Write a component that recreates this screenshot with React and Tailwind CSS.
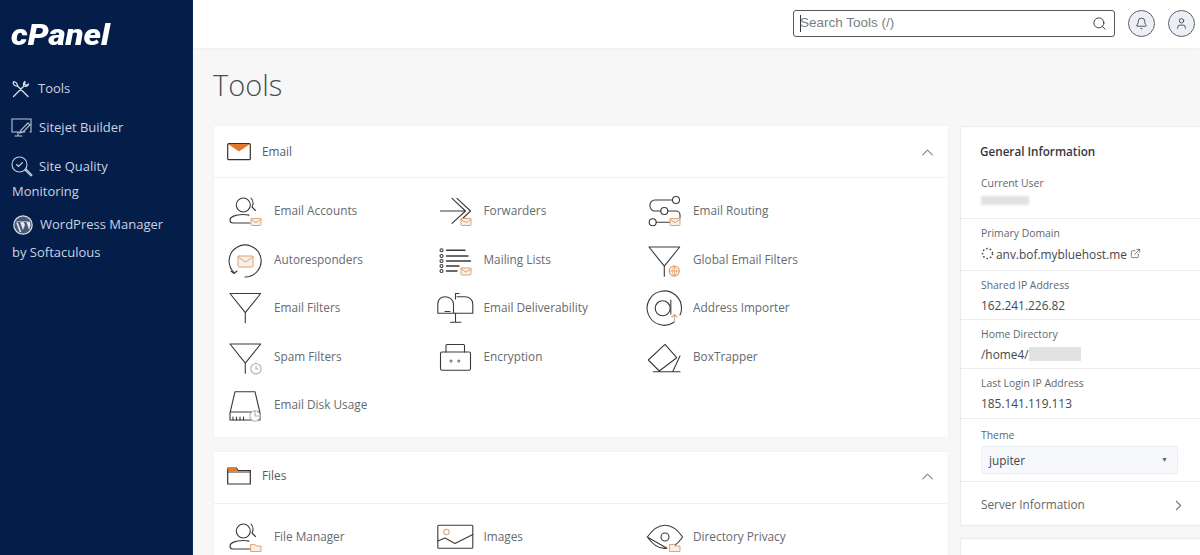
import React from "react";
import { ChevronUp, ChevronRight, Search, Bell, User, ExternalLink } from "lucide-react";

const D = "#3a3a3a";
const O = "#d9a67e";
const Env = ({ x = 25, y = 25.5, w = 10, h = 7 }) => (
  <g fill="#fbeee2" stroke={O} strokeWidth="1">
    <rect x={x} y={y} width={w} height={h} rx="1" />
    <path d={`M${x} ${y + 1}L${x + w / 2} ${y + h / 2 + 0.5}L${x + w} ${y + 1}`} fill="none" />
  </g>
);
const Fold = ({ x = 25, y = 25.5 }) => (
  <path d={`M${x} ${y}h4l1 1.5h5v5.5h-10z`} fill="#fbeee2" stroke={O} strokeWidth="1" />
);
const Ic = ({ children }) => (
  <svg width="40" height="36" viewBox="0 0 40 36" fill="none" stroke={D} strokeWidth="1.1" strokeLinecap="round" strokeLinejoin="round" className="shrink-0">
    {children}
  </svg>
);
const Person = ({ children }) => (
  <Ic>
    <circle cx="17.3" cy="12" r="7" />
    <path d="M25 5a8 8 0 0 1 1 9l3.5 3.5M24 30H7a3 3 0 0 1-3-3c0-3 5-5.5 13-5.5 2 0 4 .2 6 .6" />
    {children}
  </Ic>
);
const Funnel = ({ dy = 0, children }) => (
  <Ic>
    <path d={`M4 ${3.5 + dy}H34.7L19.3 ${22.7 + dy}ZM19.3 ${22.7 + dy}V${32.7 + dy}`} />
    {children}
  </Ic>
);

const icons = {
  accounts: <Person><Env /></Person>,
  auto: (
    <Ic>
      <path d="M8 30.5A16 16 0 1 1 19 35" />
      <path d="M5 29l3 2.5 3-2.5" />
      <Env x={12} y={14} w={15} h={11} />
    </Ic>
  ),
  filters: <Funnel />,
  spam: (
    <Funnel dy={1.5}>
      <circle cx="30" cy="29.7" r="5.2" stroke="#b9ad96" fill="#fff" />
      <path d="M30 27v3h2" stroke="#b9ad96" />
    </Funnel>
  ),
  disk: (
    <Ic>
      <path d="M9 4.7H29L34 26V33H4V26ZM4 25H34" />
      <path d="M7 30v3M10.5 30v3M14 30v3M17.5 30v3" />
      <circle cx="29" cy="29" r="5.2" stroke="#b9ad96" fill="#fff" />
      <path d="M29 29v-5M29 29h5" stroke="#b9ad96" />
    </Ic>
  ),
  forward: (
    <Ic>
      <path d="M4.5 18H29M16 5.3 29.5 18 16 30.3M21 5.3 34.5 18 25 27" />
      <Env />
    </Ic>
  ),
  lists: (
    <Ic>
      <circle cx="5.5" cy="8.3" r="1.5" /><circle cx="5.5" cy="14" r="1.5" /><circle cx="5.5" cy="19" r="1.5" /><circle cx="5.5" cy="24" r="1.5" /><circle cx="5.5" cy="29" r="1.5" />
      <path d="M10.5 8.3H29M10.5 14H32M10.5 19H34.5M10.5 24H23M10.5 29H21" strokeWidth="1.4" />
      <Env y={26} />
    </Ic>
  ),
  deliver: (
    <Ic>
      <path d="M1.8 23.3V14C1.8 9.5 5 6.7 9 6.7S17.5 9.5 17.5 14V23.3ZM9 21.5H14M17.5 23.3H36.8V14C36.8 9.5 33 6.7 29 6.7H21" />
      <path d="M19.5 23.3V32.3M14.5 32.3H25M19.5 9V3.5H23" />
    </Ic>
  ),
  encrypt: (
    <Ic>
      <rect x="4.5" y="13" width="30" height="18.3" rx="1.5" />
      <path d="M10 13V6.5a1 1 0 0 1 1-1H27.5a1 1 0 0 1 1 1V13" />
      <circle cx="15" cy="22" r="1" stroke="#777" /><circle cx="22.8" cy="22" r="1" stroke="#777" />
    </Ic>
  ),
  routing: (
    <Ic>
      <circle cx="31" cy="7" r="3.5" /><circle cx="19.3" cy="18" r="3.5" /><circle cx="7.7" cy="29.3" r="3.5" />
      <path d="M27.5 7H10a5 5 0 0 0-5 5v1a5 5 0 0 0 5 5h5.8M22.8 18H31a4 4 0 0 1 4 4v3M11.2 29.3H25" />
      <Env />
    </Ic>
  ),
  global: (
    <Funnel dy={1.5}>
      <circle cx="29.3" cy="29" r="5" stroke="#e0995f" fill="#fff" />
      <path d="M24.3 29h10M29.3 24v10M29.3 24c-3 3-3 7 0 10M29.3 24c3 3 3 7 0 10" stroke="#e0995f" strokeWidth="0.8" />
    </Funnel>
  ),
  importer: (
    <Ic>
      <path d="M29 32.3A17.2 17.2 0 1 1 36.5 18.5C36.5 21 36 23 35 25" />
      <circle cx="17.7" cy="18.3" r="7.5" />
      <path d="M25.8 10V24" />
      <path d="M29.5 32V24.5M27 27l2.5-2.5 2.5 2.5" stroke={O} />
    </Ic>
  ),
  trapper: (
    <Ic>
      <path d="M3.3 21 20 5.3 31.7 18.7 14.3 32ZM8.3 32.7H35M35 17 27.7 32.7" />
    </Ic>
  ),
  manager: <Person><Fold /></Person>,
  images: (
    <Ic>
      <rect x="1.8" y="6.3" width="35" height="23" rx="1" />
      <path d="M1.8 22 9 19l10 5.5 17.8-9" />
      <circle cx="10.5" cy="13" r="2.7" stroke={O} />
    </Ic>
  ),
  privacy: (
    <Ic>
      <path d="M2.3 18C8 10 14 6.3 20 6.3S32 10 37.7 18C35 22 32 25 29 27M22 29.2C14 30.5 8 26 2.3 18Z" />
      <circle cx="20" cy="18" r="4" />
      <Fold />
    </Ic>
  ),
};

const Row = ({ icon, label }) => (
  <div className="flex items-center h-[48.5px] gap-[8px]">
    {icons[icon]}
    <span className="text-[11.8px] text-[#666b70]">{label}</span>
  </div>
);

const Card = ({ header, title, items, headClass }) => (
  <section className="bg-white shadow-[0_0_2px_rgba(0,0,0,0.05)]">
    <div className={"h-[52px] flex items-center pl-[13px] pr-[11px] border-b border-[#f1f1f1] " + headClass}>
      <svg width="24" height="18" viewBox="0 0 24 18" fill="none" className="mr-[11px]">{header}</svg>
      <span className="text-[11.8px] text-[#555a5f]">{title}</span>
      <ChevronUp size={19} strokeWidth={1.6} className="ml-auto text-[#8a8f94]" />
    </div>
    <div className="grid grid-cols-[209.5px_209.5px_209.5px] pl-[12px] pt-[9px] pb-[7px]">
      {items.map((r) => <Row key={r[1]} icon={r[0]} label={r[1]} />)}
    </div>
  </section>
);

const Info = ({ label, children, className = "" }) => (
  <div className={"pl-[20px] border-b border-[#ececec] " + className}>
    <div className="text-[10.4px] leading-[14px] font-medium text-[#62676c]">{label}</div>
    {children}
  </div>
);
const Val = ({ children }) => <div className="text-[11.9px] leading-[18px] mt-[4px] text-[#44494e] flex items-center">{children}</div>;

const NavLine = ({ children, className = "" }) => <div className={"text-[13px] text-[#c9d3e2] px-[12px] " + className}>{children}</div>;

export default function App() {
  return (
    <div className="w-[1200px] h-[555px] overflow-hidden flex bg-[#f7f7f7] font-['Open_Sans',sans-serif]">
      <aside className="w-[193px] shrink-0 bg-[#041e49] border-r border-[#0b2a57]">
        <div className="h-[73px] pl-[11px] pt-[16px] text-[29px] leading-[38px] font-black italic text-white font-['Roboto',sans-serif]">
          <span className="inline-block origin-left scale-x-[1.14]">cPanel</span>
        </div>
        <NavLine className="flex items-center h-[32px] gap-[8px] pl-[12px]">
          <svg width="18" height="18" viewBox="0 0 18 18" fill="none" stroke="#d8e0ea" strokeWidth="1.3" strokeLinecap="round" strokeLinejoin="round"><path d="M1.5 16.5 12 6M12 6a3.2 3.2 0 0 1 1-4.5l-.5 2.5 2 1.5 2-1.5A3.2 3.2 0 0 1 12 6M16 16.5 6 6.5M6 6.5 4.5 3 2 1.5 1 3l1.5 2.5Z" /></svg>
          <span>Tools</span>
        </NavLine>
        <NavLine className="flex items-center h-[32px] gap-[7px] mt-[7px] pl-[11px]">
          <svg width="21" height="20" viewBox="0 0 21 20" fill="none" stroke="#b9c5d6" strokeWidth="1.1" strokeLinecap="round"><path d="M14 14H1V1h19v13h-1M7 14v3M4 18h7M17 5l-7 7-1 3 3-1 7-7Z" /></svg>
          <span>Sitejet Builder</span>
        </NavLine>
        <NavLine className="flex items-center h-[32px] gap-[6px] mt-[7px] pl-[11px]">
          <svg width="22" height="22" viewBox="0 0 22 22" fill="none" stroke="#c5cfdd" strokeWidth="1.1" strokeLinecap="round"><circle cx="8.5" cy="8.5" r="7.5" /><path d="M5.5 8.5l2 2 4-4M14 14l6 6 1-1-6-6" /></svg>
          <span>Site Quality</span>
        </NavLine>
        <NavLine className="h-[22px] leading-[20px] mt-[-2px]">Monitoring</NavLine>
        <NavLine className="flex items-center h-[32px] gap-[7px] mt-[6px] pl-[13px]">
          <svg width="20" height="20" viewBox="0 0 20 20"><circle cx="10" cy="10" r="9.8" fill="#d5dce6" /><circle cx="10" cy="10" r="8.6" fill="#4a5a72" /><path d="M3.5 6.5h5v1H7.5L10 14.5l1.7-4.5-1-2.8h-1v-.7h5v.7h-1l2.4 7 1-3.5c.5-2-.5-3-.5-4" fill="#e9edf2" stroke="#e9edf2" strokeWidth=".4" /><path d="M4 7.5 7.5 17" stroke="#e9edf2" strokeWidth="1.6" /></svg>
          <span>WordPress Manager</span>
        </NavLine>
        <NavLine className="h-[25px] leading-[22px]">by Softaculous</NavLine>
      </aside>
      <div className="flex-1 min-w-0 flex flex-col">
        <header className="h-[48px] shrink-0 bg-white shadow-[0_1px_3px_rgba(0,0,0,0.04)] flex items-center pl-[600px] relative">
          <div className="w-[322px] h-[27px] mt-[-2px] border border-[#55595d] rounded-[3px] bg-white flex items-center pl-[6px] pr-[7px] font-['Liberation_Sans',sans-serif]">
            <span className="w-px h-[17px] bg-[#333]" />
            <span className="text-[13.5px] mt-[1px] ml-[-1px] text-[#7b7f83]">Search Tools (/)</span>
            <Search size={15} strokeWidth={1.5} className="ml-auto text-[#33373b]" />
          </div>
          <div className="ml-[13px] w-[27px] h-[27px] mt-[-2px] rounded-full border border-[#5d6166] bg-[#eceff6] flex items-center justify-center"><Bell size={13} strokeWidth={1.5} className="text-[#333]" /></div>
          <div className="ml-[13px] w-[27px] h-[27px] mt-[-2px] rounded-full border border-[#5d6166] bg-[#eceff6] flex items-center justify-center"><User size={13} strokeWidth={1.5} className="text-[#333]" /></div>
        </header>
        <h1 className="text-[29px] leading-[40px] font-light text-[#4a4f54] pl-[20px] mt-[17px]">Tools</h1>
        <div className="flex mt-[21px] pl-[21px] gap-[12px] items-start">
          <div className="w-[734px] shrink-0 flex flex-col gap-[15px]">
            <Card
              title="Email"
              headClass="pt-[1px]"
              header={<><rect x=".7" y=".7" width="22.6" height="16" rx="1" stroke="#3a2f2a" strokeWidth="1.2" /><path d="M1 1H23L12 8.5Z" fill="#e2772e" /></>}
              items={[["accounts","Email Accounts"],["forward","Forwarders"],["routing","Email Routing"],["auto","Autoresponders"],["lists","Mailing Lists"],["global","Global Email Filters"],["filters","Email Filters"],["deliver","Email Deliverability"],["importer","Address Importer"],["spam","Spam Filters"],["encrypt","Encryption"],["trapper","BoxTrapper"],["disk","Email Disk Usage"]]}
            />
            <Card
              title="Files"
              headClass="pb-[2px]"
              header={<><path d="M.7 3V17H23.3V3.5H11L9.5 1H1Z" stroke="#3a2f2a" strokeWidth="1.2" /><path d="M1 1H9L10.5 4H1Z" fill="#e2772e" /><path d="M1 5H23" stroke="#3a2f2a" strokeWidth="1" /></>}
              items={[["manager","File Manager"],["images","Images"],["privacy","Directory Privacy"]]}
            />
          </div>
          <div className="w-[250px] shrink-0 flex flex-col gap-[12px]">
            <div className="bg-white border border-[#ebebeb] rounded-[3px]">
              <div className="h-[92px] pl-[19px] pt-[15px] border-b border-[#ececec]">
                <div className="text-[11.7px] leading-[18px] font-semibold text-[#33383d]">General Information</div>
                <div className="text-[10.4px] leading-[14px] font-medium text-[#62676c] mt-[16px] ml-[1px]">Current User</div>
                <div className="w-[48px] h-[9px] ml-[1px] mt-[6px] bg-[#e2e2e2] blur-[1px]" />
              </div>
              <Info label="Primary Domain" className="h-[52px] pt-[7px]">
                <Val>
                  <svg width="13" height="13" viewBox="0 0 13 13" className="mr-[2px]" fill="none" stroke="#44494e" strokeWidth="1.5" strokeDasharray="1.6 2"><circle cx="6.5" cy="6.5" r="5" /></svg>
                  <span className="mt-[1px]">anv.bof.mybluehost.me</span>
                  <ExternalLink size={11} strokeWidth={1.5} className="ml-[3px]" />
                </Val>
              </Info>
              <Info label="Shared IP Address" className="h-[49px] pt-[7px]"><Val>162.241.226.82</Val></Info>
              <Info label="Home Directory" className="h-[49px] pt-[7px]"><Val>/home4/<span className="w-[52px] h-[14px] bg-[#e2e2e2] blur-[0.5px] inline-block" /></Val></Info>
              <Info label="Last Login IP Address" className="h-[50px] pt-[7px]"><Val>185.141.119.113</Val></Info>
              <Info label="Theme" className="h-[63px] pt-[9px]">
                <div className="w-[197px] h-[28px] mt-[4px] pt-[1px] bg-[#f6f8fb] border border-[#eceef1] rounded-[3px] flex items-center pl-[7px] pr-[9px] text-[11.8px] text-[#44494e]">
                  jupiter
                  <span className="ml-auto text-[7px] text-[#666]">▼</span>
                </div>
              </Info>
              <div className="h-[43px] pl-[20px] pt-[3px] flex items-center text-[11.8px] text-[#62676c]">
                Server Information
                <ChevronRight size={17} strokeWidth={1.5} className="ml-[85px] text-[#777]" />
              </div>
            </div>
            <div className="bg-white border border-[#ebebeb] rounded-[3px] h-[60px]" />
          </div>
        </div>
      </div>
    </div>
  );
}
